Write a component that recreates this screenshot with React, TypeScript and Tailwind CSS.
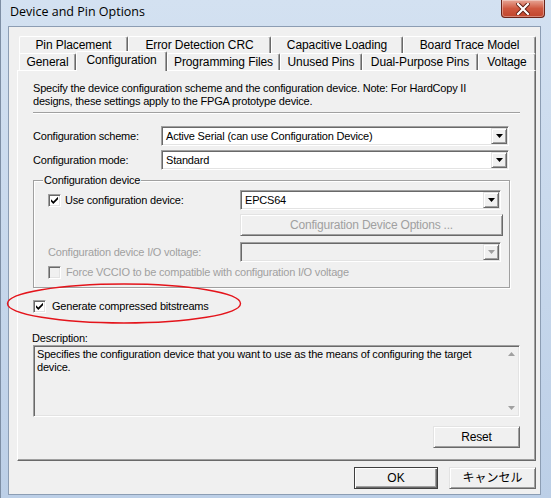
import React from 'react';

const sunken =
  'border border-t-[#a0a0a0] border-l-[#a0a0a0] border-b-white border-r-white shadow-[inset_1px_1px_0_#696969,inset_-1px_-1px_0_#e3e3e3]';
const raised =
  'border border-t-[#e3e3e3] border-l-[#e3e3e3] border-b-[#696969] border-r-[#696969] shadow-[inset_1px_1px_0_#ffffff,inset_-1px_-1px_0_#a0a0a0]';

const rowOne = [
  { label: 'Pin Placement', w: 'w-[109px]' },
  { label: 'Error Detection CRC', w: 'w-[143px]' },
  { label: 'Capacitive Loading', w: 'w-[132px]' },
  { label: 'Board Trace Model', w: 'w-[133px]' },
];

const rowTwo = [
  { label: 'General', w: 'w-[57px]' },
  { label: 'Configuration', w: 'w-[91px]', active: true },
  { label: 'Programming Files', w: 'w-[113px]' },
  { label: 'Unused Pins', w: 'w-[82px]' },
  { label: 'Dual-Purpose Pins', w: 'w-[116px]' },
  { label: 'Voltage', w: 'w-[58px]' },
];

function DownArrow({ disabled }: { disabled?: boolean }) {
  return (
    <svg width="7" height="4" viewBox="0 0 7 4">
      <path d="M0 0h7L3.5 4z" fill={disabled ? '#a0a0a0' : '#000'} />
    </svg>
  );
}

function Combo({ value, disabled, width }: { value?: string; disabled?: boolean; width: string }) {
  return (
    <div className={`h-[20px] p-[1px] flex ${sunken} ${disabled ? 'bg-[#f0f0f0]' : 'bg-white'} ${width}`}>
      <div className="flex-1 pl-[3px] leading-[16px] text-[11px]">{value}</div>
      <div className={`w-[16px] h-full flex items-center justify-center bg-[#f0f0f0] ${raised}`}>
        <DownArrow disabled={disabled} />
      </div>
    </div>
  );
}

function CheckBox({ checked, disabled }: { checked?: boolean; disabled?: boolean }) {
  return (
    <span
      className={`w-[13px] h-[13px] shrink-0 flex items-center justify-center ${sunken} ${
        disabled ? 'bg-[#f0f0f0]' : 'bg-white'
      }`}
    >
      {checked && (
        <svg width="7" height="7" viewBox="0 0 7 7">
          <path d="M0 2.2 L2.3 4.5 L7 -0.2 L7 2.2 L2.3 6.9 L0 4.6 Z" fill="#000" />
        </svg>
      )}
    </span>
  );
}

function Button({ label, width, disabled, isDefault }: { label: string; width: string; disabled?: boolean; isDefault?: boolean }) {
  return (
    <div
      className={`h-[22px] flex items-center justify-center bg-[#f0f0f0] text-[12px] ${width} ${
        isDefault
          ? 'border border-[#3f3f3f] shadow-[inset_1px_1px_0_#ffffff,inset_-1px_-1px_0_#696969,inset_-2px_-2px_0_#a0a0a0]'
          : raised
      } ${disabled ? 'text-[#a0a0a0]' : 'text-black'}`}
    >
      {label}
    </div>
  );
}

export default function App() {
  return (
    <div className="w-[551px] h-[498px] relative overflow-hidden flex flex-col bg-gradient-to-b from-[#d3e1f1] to-[#bccfe7] border-l border-l-[#7d8ea4] font-['Liberation_Sans','Noto_Sans_CJK_JP',sans-serif] text-black">
      {/* title bar */}
      <div className="h-[26px] flex items-start justify-between">
        <span className="pl-[9px] pt-[3px] text-[12.5px] leading-[18px] font-['Open_Sans','Noto_Sans_CJK_JP',sans-serif] text-black">
          Device and Pin Options
        </span>
        <div className="mr-[6px] w-[44px] h-[18px] rounded-b-[4px] border border-t-0 border-[#6b2419] bg-gradient-to-b from-[#e6a596] via-[#cf5840] to-[#c0452c] shadow-[inset_0_0_0_1px_rgba(255,255,255,0.35)] flex items-center justify-center">
          <svg width="14" height="12" viewBox="0 0 14 12">
            <path d="M2 1 L12 11 M12 1 L2 11" stroke="#5a1a10" strokeWidth="4" strokeLinecap="square" />
            <path d="M2 1 L12 11 M12 1 L2 11" stroke="#ffffff" strokeWidth="2.2" strokeLinecap="square" />
          </svg>
        </div>
      </div>

      {/* client area */}
      <div className="flex-1 flex pr-[10px] pl-[7px] pb-[3px]">
        <div className="flex-1 flex flex-col bg-[#f0f0f0] border border-[#8c9db3] pt-[9px]">
          {/* tabs */}
          <div className="flex flex-col pl-[10px] text-[12px] tracking-[-0.1px]">
            <div className="h-[17px] flex">
              {rowOne.map((t) => (
                <div
                  key={t.label}
                  className={`${t.w} h-[18px] rounded-t-[2px] border-t border-l border-white border-r border-r-[#696969] shadow-[inset_-1px_0_0_#a0a0a0] text-center leading-[13px] pt-[2px]`}
                >
                  {t.label}
                </div>
              ))}
            </div>
            <div className="h-[17px] flex items-start">
              {rowTwo.map((t) =>
                t.active ? (
                  <div
                    key={t.label}
                    className={`${t.w} h-[20px] -mt-[2px] relative z-10 bg-[#f0f0f0] rounded-t-[2px] border-t border-l border-white border-r border-r-[#696969] shadow-[inset_-1px_0_0_#a0a0a0] text-center leading-[13px] pt-[2px]`}
                  >
                    {t.label}
                  </div>
                ) : (
                  <div
                    key={t.label}
                    className={`${t.w} h-[17px] bg-[#f0f0f0] rounded-t-[2px] border-t border-l border-white border-r border-r-[#696969] shadow-[inset_-1px_0_0_#a0a0a0] text-center leading-[13px] pt-[2px]`}
                  >
                    {t.label}
                  </div>
                )
              )}
            </div>
          </div>

          {/* panel */}
          <div className="ml-[8px] w-[519px] h-[391px] flex flex-col border border-t-white border-l-white border-r-[#696969] border-b-[#696969] shadow-[inset_-1px_-1px_0_#a0a0a0] pl-[15px] pr-[15px] pt-[11px] text-[11px] leading-[13px] tracking-[-0.2px]">
            <p>
              Specify the device configuration scheme and the configuration device. Note: For HardCopy II
              <br />
              designs, these settings apply to the FPGA prototype device.
            </p>
            <div className="mt-[4px] h-[2px] border-t border-[#a0a0a0] border-b border-b-white" />

            <div className="mt-[12px] flex items-center">
              <span className="w-[128px]">Configuration scheme:</span>
              <Combo value="Active Serial (can use Configuration Device)" width="w-[348px]" />
            </div>
            <div className="mt-[4px] flex items-center">
              <span className="w-[128px]">Configuration mode:</span>
              <Combo value="Standard" width="w-[348px]" />
            </div>

            {/* group box */}
            <div className="mt-[10px] w-[477px] border border-[#a0a0a0] shadow-[inset_1px_1px_0_#ffffff,1px_1px_0_#ffffff] pl-[14px] pb-[8px]">
              <div className="-mt-[7px] ml-[-5px] px-[1px] w-fit bg-[#f0f0f0] leading-[13px]">
                Configuration device
              </div>
              <div className="mt-[3px] flex items-center">
                <div className="w-[192px] flex items-center gap-[4px]">
                  <CheckBox checked />
                  <span>Use configuration device:</span>
                </div>
                <Combo value="EPCS64" width="w-[261px]" />
              </div>
              <div className="ml-[192px] mt-[4px]">
                <Button label="Configuration Device Options ..." width="w-[263px] h-[21px]" disabled />
              </div>
              <div className="mt-[6px] flex items-center text-[#a0a0a0]">
                <span className="w-[192px]">Configuration device I/O voltage:</span>
                <Combo width="w-[261px]" disabled />
              </div>
              <div className="mt-[4px] flex items-center gap-[5px] text-[#a0a0a0]">
                <CheckBox disabled />
                <span>Force VCCIO to be compatible with configuration I/O voltage</span>
              </div>
            </div>

            <div className="mt-[12px] flex items-center gap-[6px]">
              <CheckBox checked />
              <span>Generate compressed bitstreams</span>
            </div>

            <div className="mt-[19px] -ml-[1px]">Description:</div>
            <div className={`h-[72px] w-[487px] flex bg-[#f0f0f0] ${sunken}`}>
              <div className="flex-1 pl-[3px] pt-[2px]">
                Specifies the configuration device that you want to use as the means of configuring the target
                <br />
                device.
              </div>
              <div className="w-[16px] flex flex-col justify-between items-center py-[6px]">
                <svg width="7" height="4" viewBox="0 0 7 4">
                  <path d="M0 4h7L3.5 0z" fill="#a0a0a0" />
                </svg>
                <svg width="7" height="4" viewBox="0 0 7 4">
                  <path d="M0 0h7L3.5 4z" fill="#a0a0a0" />
                </svg>
              </div>
            </div>

            <div className="mt-[9px] flex justify-end">
              <Button label="Reset" width="w-[87px]" />
            </div>
          </div>

          {/* footer */}
          <div className="mt-[6px] flex justify-end pr-[4px] gap-[11px]">
            <Button label="OK" width="w-[84px]" isDefault />
            <Button label="キャンセル" width="w-[87px]" />
          </div>
        </div>
      </div>

      {/* red annotation ellipse */}
      <svg className="absolute left-[5px] top-[283px]" width="238" height="42" viewBox="0 0 238 42">
        <ellipse cx="118" cy="20.5" rx="116.5" ry="19.5" fill="none" stroke="#e4141b" strokeWidth="1.4" />
      </svg>
    </div>
  );
}
